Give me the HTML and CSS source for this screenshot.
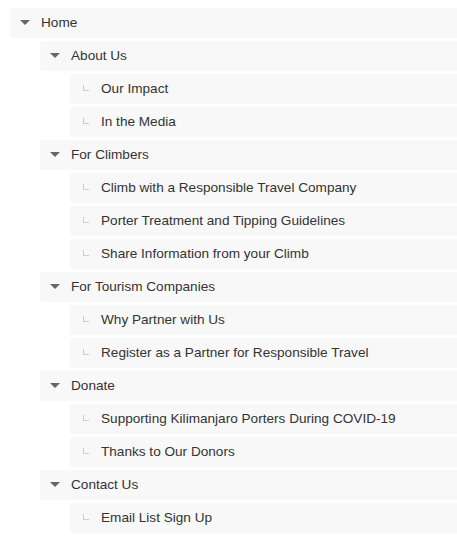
FILE: index.html
```html
<!DOCTYPE html>
<html lang="en">
<head>
    <meta charset="UTF-8">
    <title>Site Map</title>
    <link rel="stylesheet" href="styles.css">
</head>
<body>
    <ul class="tree">
        <li>
            <div class="row"><span class="caret"></span>Home</div>
            <ul class="tree">
                <li>
                    <div class="row"><span class="caret"></span>About Us</div>
                    <ul class="tree">
                        <li><div class="row"><span class="elbow"></span>Our Impact</div></li>
                        <li><div class="row"><span class="elbow"></span>In the Media</div></li>
                    </ul>
                </li>
                <li>
                    <div class="row"><span class="caret"></span>For Climbers</div>
                    <ul class="tree">
                        <li><div class="row"><span class="elbow"></span>Climb with a Responsible Travel Company</div></li>
                        <li><div class="row"><span class="elbow"></span>Porter Treatment and Tipping Guidelines</div></li>
                        <li><div class="row"><span class="elbow"></span>Share Information from your Climb</div></li>
                    </ul>
                </li>
                <li>
                    <div class="row"><span class="caret"></span>For Tourism Companies</div>
                    <ul class="tree">
                        <li><div class="row"><span class="elbow"></span>Why Partner with Us</div></li>
                        <li><div class="row"><span class="elbow"></span>Register as a Partner for Responsible Travel</div></li>
                    </ul>
                </li>
                <li>
                    <div class="row"><span class="caret"></span>Donate</div>
                    <ul class="tree">
                        <li><div class="row"><span class="elbow"></span>Supporting Kilimanjaro Porters During COVID-19</div></li>
                        <li><div class="row"><span class="elbow"></span>Thanks to Our Donors</div></li>
                    </ul>
                </li>
                <li>
                    <div class="row"><span class="caret"></span>Contact Us</div>
                    <ul class="tree">
                        <li><div class="row"><span class="elbow"></span>Email List Sign Up</div></li>
                    </ul>
                </li>
            </ul>
        </li>
    </ul>
</body>
</html>
```

FILE: styles.css
```css
* {
    margin: 0;
    padding: 0;
    box-sizing: border-box;
}
body {
    font-family: 'Liberation Sans', Arial, sans-serif;
    font-size: 13.6px;
    color: #333;
    background-color: white;
    padding: 8px 0 0 10px;
}
.tree {
    list-style: none;
}
.tree .tree {
    margin-left: 30px;
}
.row {
    display: flex;
    align-items: center;
    height: 30px;
    margin-bottom: 3px;
    padding-left: 10px;
    padding-bottom: 1px;
    background-color: #f8f8f8;
    border-radius: 3px 0 0 3px;
    white-space: nowrap;
}
.caret {
    width: 0;
    height: 0;
    border-left: 5px solid transparent;
    border-right: 5px solid transparent;
    border-top: 5px solid #5d6970;
    margin-right: 11px;
}
.elbow {
    width: 6px;
    height: 6px;
    margin-left: 3px;
    margin-right: 12px;
    margin-top: -2px;
    border-left: 1px solid #ccc;
    border-bottom: 1px solid #ccc;
}
```
